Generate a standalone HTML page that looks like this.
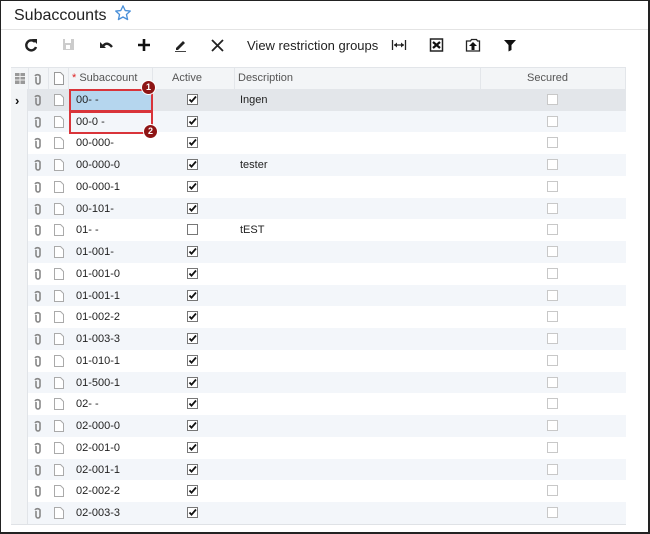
<!DOCTYPE html>
<html><head><meta charset="utf-8"><style>
*{margin:0;padding:0;box-sizing:border-box}
body{width:650px;height:534px;overflow:hidden;background:#fff;font-family:"Liberation Sans",Arial,sans-serif;position:relative}
.frame{position:absolute;left:0;top:0;width:650px;height:534px;border:1px solid #222;border-right-width:2px;border-bottom-width:2px}
.title{position:absolute;left:14px;top:4px;font-size:16px;color:#222}
.sep{position:absolute;left:1px;right:2px;top:29px;height:1px;background:#e4e4e4}
.tb{position:absolute;top:37px}
.vr{position:absolute;left:247px;top:38px;font-size:13px;color:#222}
.grid{position:absolute;left:11px;top:67px;width:615px;height:458px;border-top:1px solid #e2e5e9;border-bottom:1px solid #dfe2e6}
.hdr{position:absolute;left:11px;top:68px;width:615px;height:21px;background:#f3f5f7;font-size:11px;color:#555}
.hdr span{position:absolute;top:4px}
.vl{position:absolute;top:0;width:1px;height:21px;background:#e3e6ea}
.gut{position:absolute;left:11px;top:68px;width:17px;height:456px;background:#f2f4f6;border-right:1px solid #e1e4e8}
.row{position:absolute;left:28px;width:598px;height:21.74px;font-size:11px;color:#222}
.row.alt{background:#f3f6fa}
.row.sel{background:#e3e6ea}
.row .s{position:absolute;left:48px;top:5px}
.row .d{position:absolute;left:212px;top:5px}
.row .cb{position:absolute;left:159px;top:5px;width:11px;height:11px;border:1px solid #777;background:#fff}
.row .cb svg{position:absolute;left:0;top:0}
.row .sc{position:absolute;left:519px;top:5px;width:11px;height:11px;border:1px solid #c8c8c8;background:#fff}
.row .ic1{position:absolute;left:6px;top:5px}
.row .ic2{position:absolute;left:26px;top:5px}
.box{position:absolute;border:2px solid #d9343a}
.num{position:absolute;width:15px;height:15px;border-radius:50%;background:#8e1515;color:#fff;font-size:9px;font-weight:bold;text-align:center;line-height:13px;border:1px solid #fff}
</style></head><body>
<div class="title">Subaccounts <svg width="18" height="18" viewBox="0 0 24 24" style="vertical-align:-2px;margin-left:3px"><path d="M12 2.5l2.9 6.2 6.8.7-5.1 4.6 1.5 6.7L12 17.3l-6.1 3.4 1.5-6.7L2.3 9.4l6.8-.7z" fill="none" stroke="#4a90d9" stroke-width="1.8" stroke-linejoin="round"/></svg></div>
<div class="sep"></div>
<svg class="tb" style="left:24px" width="14" height="16" viewBox="0 0 14 16"><path d="M11 5A5 5 0 1 0 12 10" fill="none" stroke="#222" stroke-width="2.4"/><path d="M8 2h5v5z" fill="#222"/></svg>
<svg class="tb" style="left:62px" width="14" height="16" viewBox="0 0 14 16"><rect x="1" y="2" width="11" height="11" fill="#ccc"/><rect x="3" y="2" width="6" height="4" fill="#fff"/><rect x="4" y="8" width="4" height="4" fill="#fff"/></svg>
<svg class="tb" style="left:99px" width="16" height="16" viewBox="0 0 16 16"><path d="M4 9Q8 4 13 10" fill="none" stroke="#222" stroke-width="2.4"/><path d="M1 5v6h6z" fill="#222"/></svg>
<svg class="tb" style="left:137px" width="14" height="16" viewBox="0 0 14 16"><path d="M7 2v12M1 8h12" stroke="#111" stroke-width="2.6"/></svg>
<svg class="tb" style="left:173px" width="16" height="16" viewBox="0 0 16 16"><path d="M3 11l7-7 2 2-7 7H3z" fill="#222"/><path d="M2 14.5h11" stroke="#444" stroke-width="1"/></svg>
<svg class="tb" style="left:210px" width="16" height="16" viewBox="0 0 16 16"><path d="M2 3l11 11M13 3L2 14" stroke="#222" stroke-width="1.8"/></svg>
<div class="vr">View restriction groups</div>
<svg class="tb" style="left:391px" width="16" height="16" viewBox="0 0 16 16"><path d="M1.5 3v10M14.5 3v10M3 8h10" stroke="#222" stroke-width="1.3"/><path d="M3 8l3-2.5v5zM13 8l-3-2.5v5z" fill="#222"/></svg>
<svg class="tb" style="left:429px" width="16" height="16" viewBox="0 0 16 16"><rect x="1.5" y="2" width="12" height="12" fill="#fff" stroke="#222" stroke-width="1.5"/><path d="M4 5l7 6M11 5l-7 6" stroke="#111" stroke-width="2.2"/></svg>
<svg class="tb" style="left:465px" width="16" height="16" viewBox="0 0 16 16"><path d="M1.5 4h4l1 -1.5h5l1 1.5h2v10h-13z" fill="#fff" stroke="#222" stroke-width="1.3"/><path d="M8 5l4 4h-2.5v4h-3v-4H4z" fill="#111"/></svg>
<svg class="tb" style="left:503px" width="14" height="16" viewBox="0 0 14 16"><path d="M1 3h12l-4.5 5v5l-3 1.5V8z" fill="#111"/></svg>

<div class="grid"></div>
<div class="gut"></div>
<div class="hdr">
<svg style="position:absolute;left:4px;top:5px" width="10" height="11" viewBox="0 0 10 11"><rect x="0" y="0" width="10" height="11" fill="#999"/><path d="M0 3.5h10M0 7h10M5 0v11" stroke="#eee" stroke-width="1"/></svg>
<div class="vl" style="left:17px"></div>
<svg style="position:absolute;left:23px;top:5px" width="8" height="12" viewBox="0 0 8 12"><path d="M2 4v5a2 2 0 0 0 4 0V3a3 3 0 0 0-5 0" fill="none" stroke="#888" stroke-width="1.6"/></svg>
<div class="vl" style="left:37px"></div>
<svg style="position:absolute;left:43px;top:4px" width="10" height="13" viewBox="0 0 10 13"><path d="M.5 .5h6l3 3v9h-9z" fill="#fff" stroke="#999"/></svg>
<div class="vl" style="left:57px"></div>
<span style="left:61px"><b style="color:#d22;font-weight:normal">*</b> Subaccount</span>
<div class="vl" style="left:141px"></div>
<span style="left:161px">Active</span>
<div class="vl" style="left:223px"></div>
<span style="left:227px">Description</span>
<div class="vl" style="left:469px"></div>
<span style="left:516px">Secured</span>
<div class="vl" style="left:614px"></div>
</div>
<div style="position:absolute;left:15px;top:93px;font-size:13px;font-weight:bold;color:#111">&#8250;</div>

<div id="rows"></div>
<script>
var data=[["00- -",1,"Ingen"],["00-0 -",1,""],["00-000-",1,""],["00-000-0",1,"tester"],["00-000-1",1,""],["00-101-",1,""],["01- -",0,"tEST"],["01-001-",1,""],["01-001-0",1,""],["01-001-1",1,""],["01-002-2",1,""],["01-003-3",1,""],["01-010-1",1,""],["01-500-1",1,""],["02- -",1,""],["02-000-0",1,""],["02-001-0",1,""],["02-001-1",1,""],["02-002-2",1,""],["02-003-3",1,""]];
var h="";
for(var i=0;i<data.length;i++){var d=data[i];var cls="row"+(i==0?" sel":(i%2?" alt":""));
h+='<div class="'+cls+'" style="top:'+(89+i*21.74)+'px">'+
'<svg class="ic1" width="8" height="12" viewBox="0 0 8 12"><path d="M2 4v5a2 2 0 0 0 4 0V3a3 3 0 0 0-5 0" fill="none" stroke="#888" stroke-width="1.6"/></svg>'+
'<svg class="ic2" width="10" height="12" viewBox="0 0 10 12"><path d="M.5 .5h6l3 3v8h-9z" fill="#fff" stroke="#aaa"/></svg>'+
'<span class="s">'+d[0]+'</span>'+
'<div class="cb">'+(d[1]?'<svg width="9" height="9" viewBox="0 0 9 9"><path d="M1.5 4.5l2 2.2L8 1.5" fill="none" stroke="#111" stroke-width="1.8"/></svg>':'')+'</div>'+
(d[2]?'<span class="d">'+d[2]+'</span>':'')+
'<div class="sc"></div></div>';}
document.getElementById("rows").innerHTML=h;
</script>
<div style="position:absolute;left:71px;top:91px;width:80px;height:19px;background:#b5d6ee"></div>
<div style="position:absolute;left:76px;top:94px;font-size:11px;color:#222">00- -</div>
<div class="box" style="left:69px;top:89px;width:84px;height:23px"></div>
<div class="box" style="left:69px;top:111px;width:84px;height:23px"></div>
<div class="num" style="left:141px;top:80px">1</div>
<div class="num" style="left:143px;top:124px">2</div>
<div class="frame"></div>
</body></html>
